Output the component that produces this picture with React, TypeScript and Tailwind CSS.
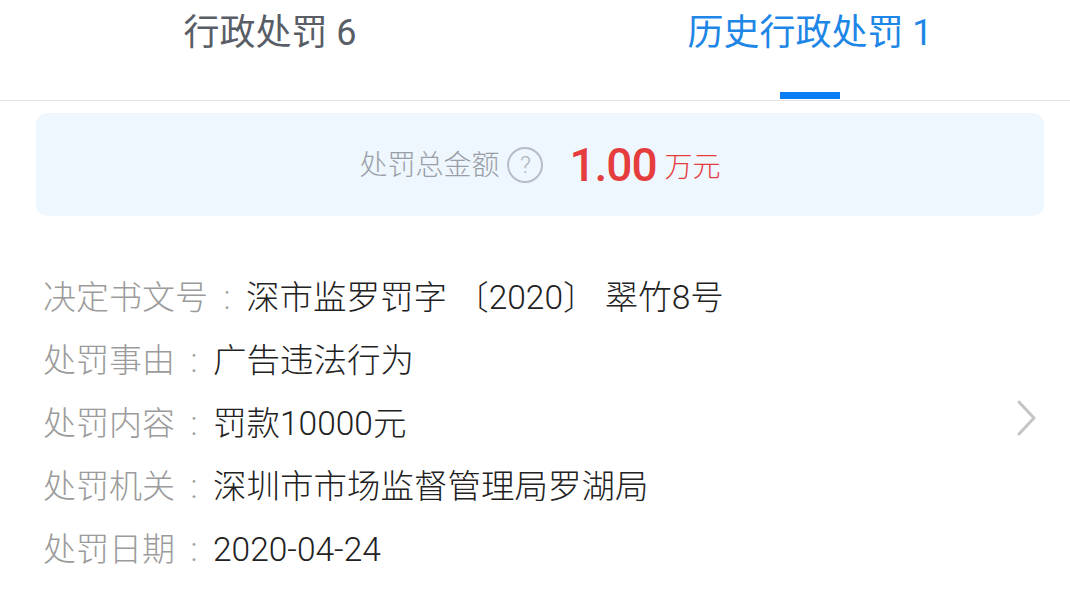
import React from "react";

const rows: { label: string; value: string }[] = [
  { label: "决定书文号", value: "深市监罗罚字 〔2020〕 翠竹8号" },
  { label: "处罚事由", value: "广告违法行为" },
  { label: "处罚内容", value: "罚款10000元" },
  { label: "处罚机关", value: "深圳市市场监督管理局罗湖局" },
  { label: "处罚日期", value: "2020-04-24" },
];

export default function App() {
  return (
    <div
      className="w-[1070px] h-[598px] bg-white overflow-hidden"
      style={{ fontFamily: 'Roboto, "Noto Sans CJK SC", "Noto Sans", sans-serif' }}
    >
      {/* Tabs */}
      <div className="relative flex h-[101px] border-b border-[#e2e2e2]">
        <div className="w-[540px] flex items-start justify-center pt-[10px]">
          <span className="text-[36px] leading-[46px] text-[#585d66]">行政处罚 6</span>
        </div>
        <div className="relative flex-1 flex items-start justify-center pt-[10px] pl-[10px]">
          <span className="text-[36px] leading-[46px] text-[#1d86e6]">历史行政处罚 1</span>
          <div className="absolute bottom-[1px] left-[240px] w-[60px] h-[7px] bg-[#0a7ff5]" />
        </div>
      </div>

      {/* Summary card */}
      <div className="pl-[36px] pr-[26px] pt-[12px]">
        <div className="h-[103px] rounded-[12px] bg-[#eef6fe] flex items-center justify-center">
          <span className="mt-[2px] text-[28px] font-light text-[#9a9fa7]">处罚总金额</span>
          <span className="ml-[8px] w-[36px] h-[36px] rounded-full border-2 border-[#b8bdc5] flex items-center justify-center text-[24px] font-light leading-none text-[#b0b5bd]">
            ?
          </span>
          <span className="ml-[26px] text-[46px] font-medium leading-none tracking-[-1px] text-[#e53d3e]">
            1.00
          </span>
          <span className="ml-[8px] mt-[6px] text-[28px] font-light text-[#e53d3e]">万元</span>
        </div>
      </div>

      {/* Details */}
      <div className="relative pt-[50px] pl-[43px] pr-[34px] font-light">
        <div className="flex flex-col">
          {rows.map((r) => (
            <div key={r.label} className="flex items-center h-[63px] text-[33px] leading-[63px] whitespace-pre">
              <span className="text-[#9b9b9b]">{r.label}</span>
              <span className="w-[38px] text-center text-[#9b9b9b]">:</span>
              <span className="text-[33.5px] text-[#222222]">{r.value}</span>
            </div>
          ))}
        </div>
        <svg
          className="absolute right-[32px] top-[183px]"
          width="22"
          height="38"
          viewBox="0 0 22 38"
          fill="none"
        >
          <path d="M3 3 L18 19 L3 35" stroke="#c4c4c4" strokeWidth="3" strokeLinecap="round" strokeLinejoin="round" />
        </svg>
      </div>
    </div>
  );
}
